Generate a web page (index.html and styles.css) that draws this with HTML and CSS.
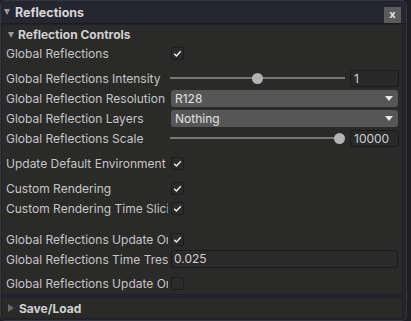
FILE: index.html
```html
<!DOCTYPE html>
<html>
<head>
<meta charset="utf-8">
<link rel="stylesheet" href="styles.css">
</head>
<body>
<div class="window">
  <div class="titlebar">
    <span class="tri-down big"></span>
    <span class="title">Reflections</span>
    <span class="close">x</span>
  </div>
  <div class="panel main">
    <div class="header"><span class="tri-down"></span><span>Reflection Controls</span></div>

    <div class="row"><div class="label">Global Reflections</div><div class="ctl"><span class="cb"><svg viewBox="0 0 13 13"><path d="M3.2 6.8 L5.4 9 L9.8 4.2"/></svg></span></div></div>

    <div class="row g5"><div class="label">Global Reflections Intensity</div><div class="ctl slider-ctl"><div class="slider"><div class="track"></div><div class="thumb" style="left: 82px"></div></div><div class="num">1</div></div></div>

    <div class="row"><div class="label">Global Reflection Resolution</div><div class="ctl"><div class="dd"><span>R128</span><span class="arrow"></span></div></div></div>

    <div class="row"><div class="label">Global Reflection Layers</div><div class="ctl"><div class="dd"><span>Nothing</span><span class="arrow"></span></div></div></div>

    <div class="row"><div class="label">Global Reflections Scale</div><div class="ctl slider-ctl"><div class="slider"><div class="track"></div><div class="thumb" style="left: 164px"></div></div><div class="num">10000</div></div></div>

    <div class="row g5"><div class="label">Update Default Environment</div><div class="ctl"><span class="cb"><svg viewBox="0 0 13 13"><path d="M3.2 6.8 L5.4 9 L9.8 4.2"/></svg></span></div></div>

    <div class="row g5"><div class="label">Custom Rendering</div><div class="ctl"><span class="cb"><svg viewBox="0 0 13 13"><path d="M3.2 6.8 L5.4 9 L9.8 4.2"/></svg></span></div></div>

    <div class="row"><div class="label">Custom Rendering Time Slicing</div><div class="ctl"><span class="cb"><svg viewBox="0 0 13 13"><path d="M3.2 6.8 L5.4 9 L9.8 4.2"/></svg></span></div></div>

    <div class="row g11"><div class="label">Global Reflections Update On Move</div><div class="ctl"><span class="cb"><svg viewBox="0 0 13 13"><path d="M3.2 6.8 L5.4 9 L9.8 4.2"/></svg></span></div></div>

    <div class="row"><div class="label">Global Reflections Time Treshold</div><div class="ctl"><div class="text">0.025</div></div></div>

    <div class="row g4"><div class="label">Global Reflections Update On Start</div><div class="ctl"><span class="cb"></span></div></div>
  </div>
  <div class="panel foot">
    <div class="header"><span class="tri-right"></span><span>Save/Load</span></div>
  </div>
</div>
</body>
</html>
```

FILE: styles.css
```css
* { box-sizing: border-box; }
html, body {
  margin: 0;
  padding: 0;
  background: #1d1d22;
  font-family: Inter, "Noto Sans", sans-serif;
  font-size: 12px;
  color: #c6c6c6;
}
.window {
  width: 407px;
  height: 321px;
  background: #24242d;
  border: 1px solid #363641;
  border-radius: 5px;
  display: flex;
  flex-direction: column;
  overflow: hidden;
}
.titlebar {
  height: 23px;
  flex: none;
  display: flex;
  align-items: center;
  padding-left: 3px;
  background: #262630;
  border-bottom: 1px solid #1b1b21;
  position: relative;
}
.title {
  font-weight: 700;
  color: #d6d6d6;
  font-size: 12.5px;
  margin-left: 5px;
}
.close {
  position: absolute;
  right: 5px;
  top: 6px;
  width: 17px;
  height: 16px;
  background: #5b5b5b;
  color: #e2e2e2;
  font-weight: 700;
  font-size: 11px;
  line-height: 15px;
  text-align: center;
}
.tri-down {
  display: inline-block;
  width: 0;
  height: 0;
  border-left: 3.5px solid transparent;
  border-right: 3.5px solid transparent;
  border-top: 6px solid #9a9a9a;
}
.tri-right {
  display: inline-block;
  width: 0;
  height: 0;
  border-top: 4px solid transparent;
  border-bottom: 4px solid transparent;
  border-left: 6px solid #6a6a6a;
}
.panel {
  background: #2a2a29;
  border: 1px solid #222225;
  border-radius: 3px;
  margin-right: 3px;
  flex: none;
}
.main {
  height: 271px;
  padding: 1px 3px 0 4px;
}
.foot {
  margin-top: 2px;
  height: 22px;
}
.header {
  height: 17px;
  display: flex;
  align-items: center;
  font-weight: 700;
  color: #d2d2d2;
  gap: 4px;
  padding-left: 2px;
}
.foot .header {
  height: 20px;
  padding-left: 6px;
  gap: 5px;
}
.row {
  height: 20px;
  display: flex;
  align-items: center;
}
.g4 { margin-top: 4px; }
.g5 { margin-top: 5px; }
.g11 { margin-top: 11px; }
.label {
  width: 162px;
  margin-right: 3px;
  flex: none;
  white-space: nowrap;
  overflow: hidden;
}
.ctl {
  flex: 1;
  display: flex;
  align-items: center;
  height: 100%;
}
.cb {
  width: 13px;
  height: 13px;
  border: 1px solid #1c1c1c;
  border-radius: 2px;
  background: #2b2b2b;
  display: block;
  position: relative;
}
.cb svg {
  position: absolute;
  left: -1px;
  top: -1px;
  width: 13px;
  height: 13px;
  fill: none;
  stroke: #f0f0f0;
  stroke-width: 1.4;
}
.slider-ctl {
  margin-left: -1px;
  gap: 5px;
}
.slider {
  flex: 1;
  height: 12px;
  position: relative;
}
.track {
  position: absolute;
  left: 0;
  right: 0;
  top: 5px;
  height: 2px;
  background: #767676;
}
.thumb {
  position: absolute;
  top: 1px;
  width: 11px;
  height: 11px;
  border-radius: 50%;
  background: #b3b3b3;
}
.num {
  width: 49px;
  height: 17px;
  flex: none;
  background: #292929;
  border: 1px solid #1a1a1a;
  border-radius: 3px;
  padding-left: 3px;
  line-height: 15px;
  color: #cfcfcf;
}
.dd {
  width: 227px;
  height: 17px;
  background: #565656;
  border-radius: 3px;
  display: flex;
  align-items: center;
  justify-content: space-between;
  padding: 0 5px 0 4px;
  color: #e2e2e2;
}
.arrow {
  width: 0;
  height: 0;
  border-left: 4px solid transparent;
  border-right: 4px solid transparent;
  border-top: 5px solid #e6e6e6;
}
.text {
  width: 227px;
  height: 18px;
  background: #2a2a2a;
  border: 1px solid #1a1a1a;
  border-radius: 3px;
  padding-left: 2px;
  line-height: 16px;
  color: #d0d0d0;
}
```
